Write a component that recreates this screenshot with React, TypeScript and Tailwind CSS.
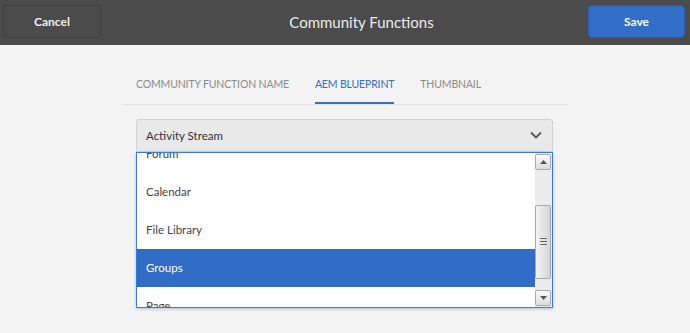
import React from "react";

const ITEMS = ["Forum", "Calendar", "File Library", "Groups", "Page"];

export default function App() {
  const selected = "Groups";

  return (
    <div className="w-[690px] h-[333px] bg-[#f3f3f3] overflow-hidden" style={{ fontFamily: "Lato, 'Open Sans', sans-serif" }}>
      {/* Top bar */}
      <div className="h-[45px] bg-[#4b4b4b] flex items-center justify-between px-[3px]">
        <button className="w-[98px] h-[33px] mt-[-2px] rounded-[4px] border border-[#3d3d3d] bg-[#4b4b4b] text-[#f0f0f0] text-[12px] font-bold">
          Cancel
        </button>
        <div className="text-[#ececec] text-[15px] ml-[34px]">Community Functions</div>
        <button className="w-[97px] h-[33px] mt-[-2px] mr-[2px] rounded-[4px] border border-[#2a5aa8] bg-[#326ec8] text-white text-[12px] font-bold">
          Save
        </button>
      </div>

      {/* Tabs */}
      <div className="mx-[122px] mt-[25px] border-b border-[#e2e2e2] flex pl-[14px] gap-[26px] text-[10.5px] tracking-[-0.15px]">
        <div className="pb-[11px] pt-[7px] text-[#8c8c8c]">COMMUNITY FUNCTION NAME</div>
        <div className="pb-[9px] pt-[7px] text-[#326ec8] border-b-2 border-[#326ec8]">AEM BLUEPRINT</div>
        <div className="pb-[11px] pt-[7px] text-[#8c8c8c]">THUMBNAIL</div>
      </div>

      {/* Select */}
      <div className="ml-[136px] w-[417px] mt-[14px]">
        <div className="h-[33px] bg-[#e9e9e9] border border-[#d2d2d2] rounded-t-[3px] flex items-center justify-between pl-[9px] pr-[10px]">
          <span className="text-[11.5px] text-[#333]">Activity Stream</span>
          <svg width="12" height="8" viewBox="0 0 12 8">
            <path d="M1 1.5 L6 6.5 L11 1.5" fill="none" stroke="#555" strokeWidth="1.8" />
          </svg>
        </div>

        {/* Dropdown list */}
        <div className="h-[156px] border border-[#3b78d8] bg-white shadow-[0_1px_3px_rgba(50,110,200,0.35)] flex overflow-hidden">
          <div className="flex-1 overflow-hidden">
            <div className="mt-[-18px]">
              {ITEMS.map((item) => (
                <div
                  key={item}
                  className={
                    item === selected
                      ? "h-[38px] flex items-center pl-[9px] text-[11.5px] bg-[#316dc7] text-white"
                      : "h-[38px] flex items-center pl-[9px] text-[11.5px] text-[#444]"
                  }
                >
                  {item}
                </div>
              ))}
            </div>
          </div>

          {/* Scrollbar */}
          <div className="w-[17px] bg-[#ececec] flex flex-col py-[1px] pr-[1px]">
            <div className="h-[16px] border border-[#a8a8a8] rounded-[2px] bg-gradient-to-b from-[#fafafa] to-[#dcdcdc] flex items-center justify-center">
              <svg width="7" height="4" viewBox="0 0 7 4"><path d="M0 4 L3.5 0 L7 4 Z" fill="#555" /></svg>
            </div>
            <div className="h-[35px]" />
            <div className="h-[74px] border border-[#a8a8a8] rounded-[2px] bg-gradient-to-r from-[#f4f4f4] to-[#d6d6d6] flex items-center justify-center">
              <div className="flex flex-col gap-[2px]">
                <div className="w-[7px] h-[1px] bg-[#666]" />
                <div className="w-[7px] h-[1px] bg-[#666]" />
                <div className="w-[7px] h-[1px] bg-[#666]" />
              </div>
            </div>
            <div className="flex-1" />
            <div className="h-[16px] border border-[#a8a8a8] rounded-[2px] bg-gradient-to-b from-[#fafafa] to-[#dcdcdc] flex items-center justify-center">
              <svg width="7" height="4" viewBox="0 0 7 4"><path d="M0 0 L3.5 4 L7 0 Z" fill="#555" /></svg>
            </div>
          </div>
        </div>
      </div>
    </div>
  );
}
